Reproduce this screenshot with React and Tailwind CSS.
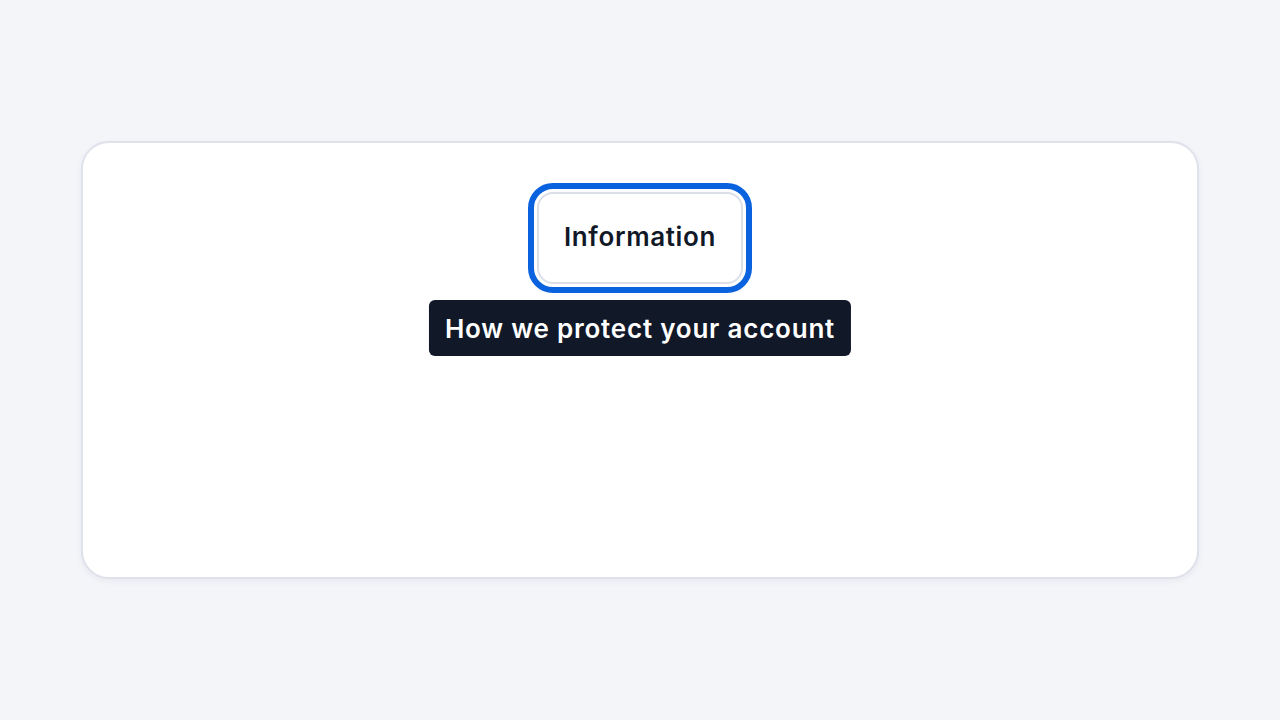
export default function App() {
  return (
    <div className="min-h-screen w-full flex items-center justify-center bg-[#f4f5f9]" style={{ fontFamily: 'Inter, "Noto Sans", sans-serif' }}>
      <div className="w-[1118px] h-[438px] bg-white border-2 border-[#dfe2ea] rounded-[28px] shadow-[0_2px_6px_rgba(30,40,80,0.06)] flex flex-col items-center pt-[49px]">
        <div className="relative flex flex-col items-center">
          <button className="w-[206px] h-[92px] pb-[3px] rounded-[16px] border-2 border-[#dcdfe8] bg-white text-[26px] font-semibold text-[#111827] tracking-[0.025em] outline-[6px] outline-solid outline-[#0a62de] outline-offset-[3px]">
            Information
          </button>
          <div className="absolute top-[108px] left-1/2 -translate-x-1/2 whitespace-nowrap h-[56px] px-4 flex items-center rounded-[6px] bg-[#111827] text-white text-[26px] font-semibold tracking-[0.03em]">
            How we protect your account
          </div>
        </div>
      </div>
    </div>
  );
}
